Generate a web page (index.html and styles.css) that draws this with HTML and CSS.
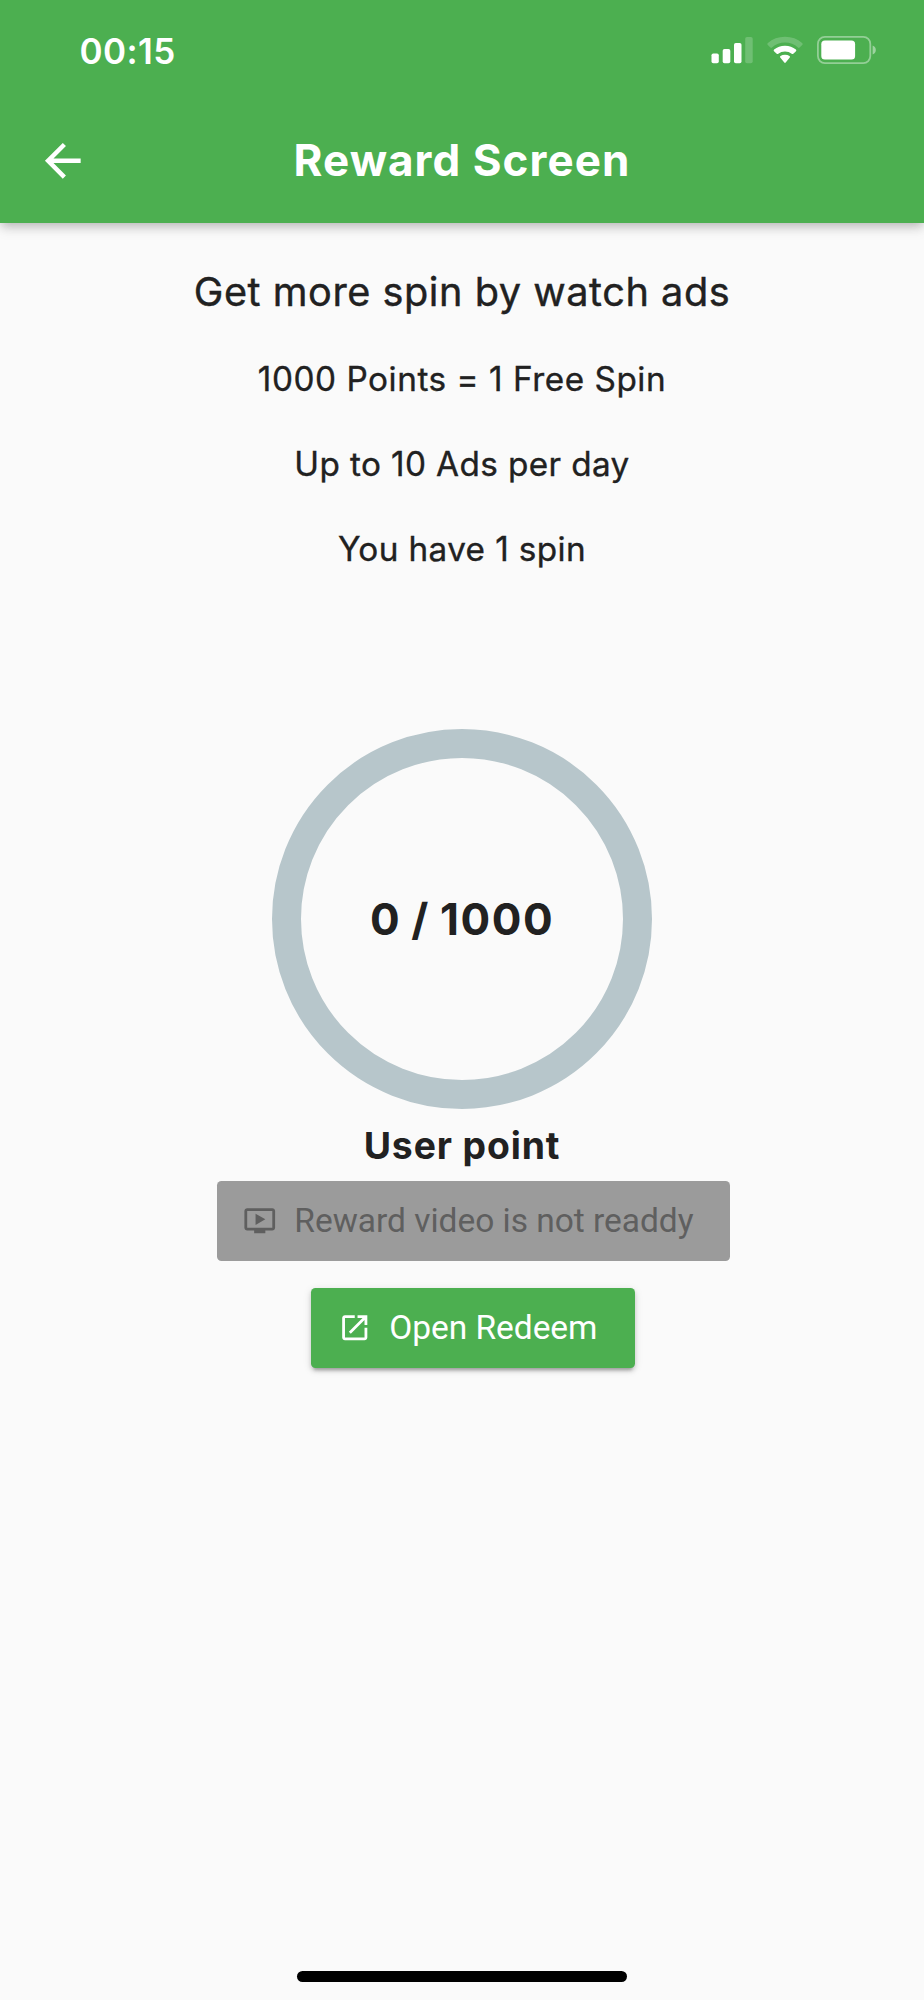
FILE: index.html
```html
<!DOCTYPE html>
<html lang="en">
<head>
<meta charset="utf-8">
<title>Reward Screen</title>
<link rel="stylesheet" href="styles.css">
</head>
<body>
<div class="screen">
  <header class="header">
    <div class="status-bar">
      <span class="clock">00:15</span>
      <div class="status-icons">
        <svg class="signal" width="42" height="28" viewBox="0 0 42 28" fill="#fff">
          <rect x="0.5" y="17.5" width="7.3" height="9.7" rx="1.8"/>
          <rect x="11.7" y="13" width="7.6" height="14.2" rx="1.8"/>
          <rect x="23" y="7" width="7.5" height="20.2" rx="1.8"/>
          <rect x="34.2" y="1" width="7.5" height="26.2" rx="1.8" opacity="0.2"/>
        </svg>
        <svg class="wifi" width="36" height="28" viewBox="0 0 36 28" fill="#fff">
          <path opacity="0.2" d="M0.8 9Q-0.2 8.1 0.9 7Q7.8 0.8 18 0.8Q28.2 0.8 35.1 7Q36.2 8.1 35.2 9L32.6 11.6Q31.8 12.3 31 11.6Q25.5 6.6 18 6.6Q10.5 6.6 5 11.6Q4.2 12.3 3.4 11.6Z"/>
          <path d="M7 15.2Q6.2 14.3 7.1 13.5Q11.6 9.7 18 9.7Q24.4 9.7 28.9 13.5Q29.8 14.3 29 15.2L26.3 17.8Q25.5 18.4 24.7 17.8Q22 15.5 18 15.5Q14 15.5 11.3 17.8Q10.5 18.4 9.7 17.8Z"/>
          <path d="M13.2 21.5Q12.6 20.7 13.5 20.1Q15.4 18.8 18 18.8Q20.6 18.8 22.5 20.1Q23.4 20.7 22.8 21.5L18.7 26.6Q18 27.3 17.3 26.6Z"/>
        </svg>
        <svg class="battery" width="60" height="28" viewBox="0 0 60 28">
          <rect x="0.9" y="0.9" width="52.4" height="26.2" rx="7" fill="none" stroke="#fff" stroke-width="1.8" opacity="0.4"/>
          <rect x="4.3" y="4.6" width="33.8" height="19" rx="3.6" fill="#fff"/>
          <path d="M55.6 9.5Q58.8 10.9 58.8 14Q58.8 17.1 55.6 18.5Z" fill="#fff" opacity="0.45"/>
        </svg>
      </div>
    </div>
    <div class="toolbar">
      <svg class="back" viewBox="0 0 24 24" fill="#fff"><path d="M20 11H7.83l5.59-5.59L12 4l-8 8 8 8 1.41-1.41L7.83 13H20v-2z"/></svg>
      <h1 class="title">Reward Screen</h1>
    </div>
  </header>
  <main class="content">
    <p class="lead">Get more spin by watch ads</p>
    <p class="info info-points">1000 Points = 1 Free Spin</p>
    <p class="info">Up to 10 Ads per day</p>
    <p class="info">You have 1 spin</p>
    <div class="ring"><span class="ring-value">0 / 1000</span></div>
    <h2 class="caption">User point</h2>
    <div class="actions">
      <button class="btn btn-video" disabled>
        <svg class="btn-icon" viewBox="0 0 24 24" fill="currentColor"><path d="M21 3H3c-1.11 0-2 .89-2 2v12c0 1.1.89 2 2 2h5v2h8v-2h5c1.1 0 1.99-.9 1.99-2L23 5c0-1.11-.9-2-2-2zm0 14H3V5h18v12zm-5-6l-7 4V7z"/></svg>
        <span>Reward video is not readdy</span>
      </button>
      <button class="btn btn-redeem">
        <svg class="btn-icon" viewBox="0 0 24 24" fill="currentColor"><path d="M19 19H5V5h7V3H5c-1.11 0-2 .9-2 2v14c0 1.1.89 2 2 2h14c1.1 0 2-.9 2-2v-7h-2v7zM14 3v2h3.59l-9.83 9.83 1.41 1.41L19 6.41V10h2V3h-7z"/></svg>
        <span>Open Redeem</span>
      </button>
    </div>
  </main>
  <footer class="footer"><div class="home-indicator"></div></footer>
</div>
</body>
</html>
```
FILE: styles.css
```css
* { box-sizing: border-box; }

body {
  margin: 0;
  background: #fafafa;
  color: #212121;
  font-family: Inter, "Liberation Sans", sans-serif;
}

h1, h2, p { margin: 0; }

.screen {
  display: flex;
  flex-direction: column;
  width: 924px;
  height: 2000px;
  overflow: hidden;
}

.header {
  height: 223px;
  flex: none;
  background: #4caf50;
  color: #fff;
  box-shadow: 0 4px 9px -2px rgba(0, 0, 0, 0.17), 0 9px 11px rgba(0, 0, 0, 0.05), 0 2px 12px rgba(0, 0, 0, 0.1);
}

.status-bar {
  display: flex;
  justify-content: space-between;
  height: 98px;
  padding: 30px 47px 0 79.5px;
}

.clock {
  font-size: 35px;
  font-weight: 600;
  line-height: 42px;
  letter-spacing: 0.4px;
}

.status-icons {
  display: flex;
  align-items: flex-start;
  padding-top: 6px;
}

.wifi { margin: 0 14px; }

.toolbar {
  display: grid;
  grid-template-columns: 125px 1fr 125px;
  align-items: center;
  height: 125px;
}

.back {
  width: 53.6px;
  height: 53.6px;
  margin-left: 36px;
}

.title {
  padding-bottom: 1px;
  font-size: 44px;
  font-weight: 700;
  line-height: 54px;
  letter-spacing: 1.05px;
  text-align: center;
  white-space: nowrap;
}

.content {
  display: flex;
  flex: 1;
  flex-direction: column;
  align-items: center;
  padding-top: 45px;
}

.lead {
  font-size: 39.7px;
  line-height: 48px;
  letter-spacing: 0.53px;
  -webkit-text-stroke: 0.4px currentColor;
}

.info {
  margin-top: 45px;
  font-size: 33.3px;
  line-height: 40px;
  letter-spacing: 0.38px;
  -webkit-text-stroke: 0.35px currentColor;
}

.info-points {
  margin-top: 43px;
  letter-spacing: 0.54px;
}

.ring {
  display: flex;
  align-items: center;
  justify-content: center;
  width: 380px;
  height: 380px;
  margin-top: 160px;
  border: 29px solid #b7c6cb;
  border-radius: 50%;
}

.ring-value {
  font-size: 44px;
  font-weight: 700;
  line-height: 54px;
  letter-spacing: 1.5px;
  word-spacing: -1.7px;
}

.caption {
  margin-top: 14.5px;
  font-size: 37.3px;
  font-weight: 700;
  line-height: 44px;
  letter-spacing: 0.88px;
}

.actions {
  display: flex;
  flex-direction: column;
  align-items: center;
  gap: 27px;
  margin-top: 13.5px;
  padding-left: 22px;
}

.btn {
  display: flex;
  align-items: center;
  gap: 17.8px;
  height: 80px;
  padding: 0 0 0 26.5px;
  border: 0;
  border-radius: 4.5px;
  font-family: Roboto, "Liberation Sans", sans-serif;
  font-size: 33.5px;
  line-height: 40px;
  white-space: nowrap;
}

.btn-icon {
  flex: none;
  width: 33.5px;
  height: 33.5px;
}

.btn-video {
  width: 513px;
  background: #9b9b9b;
  color: #5f5f5f;
  letter-spacing: -0.02px;
}

.btn-redeem {
  width: 324px;
  padding-left: 27px;
  background: #4caf50;
  color: #fff;
  letter-spacing: -0.05px;
  box-shadow: 0 5px 3px -3px rgba(0, 0, 0, 0.2), 0 3px 4px rgba(0, 0, 0, 0.14), 0 2px 8px rgba(0, 0, 0, 0.12);
}

.footer {
  display: flex;
  justify-content: center;
  flex: none;
  height: 29px;
}

.home-indicator {
  width: 330px;
  height: 11px;
  border-radius: 6px;
  background: #000;
}
```
